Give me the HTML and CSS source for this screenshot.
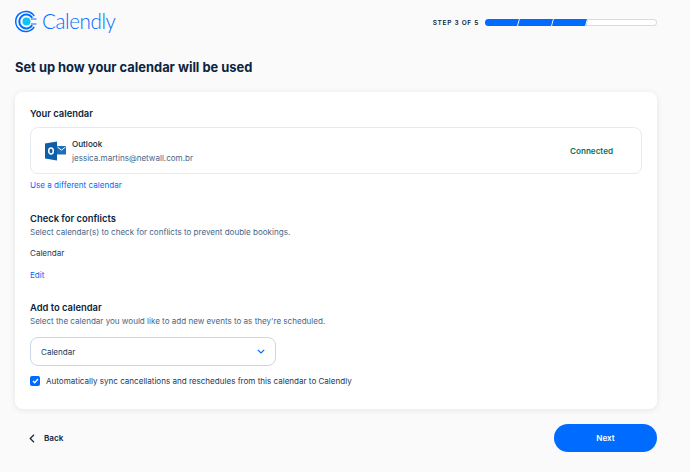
FILE: index.html
```html
<!DOCTYPE html>
<html lang="en">
<head>
<meta charset="utf-8">
<title>Calendly setup</title>
<link rel="stylesheet" href="styles.css">
</head>
<body>
<div class="page">
  <header class="topbar">
    <div class="logo">
      <svg class="logo-mark" width="22" height="23" viewBox="0 0 22 23" fill="none">
        <path d="M19.2 6.2A10 10 0 1 0 19.2 16.8" stroke="#006bff" stroke-width="1.5"/>
        <path d="M17.2 7.8A7 7 0 1 0 17.2 15.2" stroke="#006bff" stroke-width="2"/>
        <circle cx="11.5" cy="11.5" r="4" fill="#12c2f0"/>
        <path d="M16 9H21.5M16 14H21.5" stroke="#006bff" stroke-width="1.2"/>
      </svg>
      <span class="logo-text">Calendly</span>
    </div>
    <div class="progress">
      <span class="step">STEP 3 OF 5</span>
      <div class="track">
        <span class="seg"></span><span class="seg"></span><span class="seg"></span>
      </div>
    </div>
  </header>

  <h1 class="title">Set up how your calendar will be used</h1>

  <main class="card">
    <h2 class="heading">Your calendar</h2>
    <div class="account">
      <svg class="outlook" width="21" height="20" viewBox="0 0 21 20">
        <path d="M12 5H21V13.5H12Z" fill="#1f6fb5"/>
        <path d="M12.5 6 16.5 9.2 20.5 6" fill="none" stroke="#fff" stroke-width="1"/>
        <path d="M12 0.5 0 2.5V17.5L12 19.5Z" fill="#0e5ea8"/>
        <ellipse cx="6" cy="10" rx="2.3" ry="3" fill="none" stroke="#fff" stroke-width="1.5"/>
      </svg>
      <div class="account-info">
        <span class="account-name">Outlook</span>
        <span class="account-mail">jessica.martins@netwall.com.br</span>
      </div>
      <span class="status">Connected</span>
    </div>
    <a class="link link-change" href="#">Use a different calendar</a>

    <h2 class="heading heading-conflicts">Check for conflicts</h2>
    <p class="desc">Select calendar(s) to check for conflicts to prevent double bookings.</p>
    <p class="cal-name">Calendar</p>
    <a class="link link-edit" href="#">Edit</a>

    <h2 class="heading heading-add">Add to calendar</h2>
    <p class="desc">Select the calendar you would like to add new events to as they're scheduled.</p>
    <div class="select">
      <span>Calendar</span>
      <svg width="8" height="5" viewBox="0 0 8 5" fill="none"><path d="M.8.8 4 4 7.2.8" stroke="#006bff" stroke-width="1.2"/></svg>
    </div>
    <label class="check">
      <span class="box"><svg width="7" height="6" viewBox="0 0 7 6" fill="none"><path d="M1 3 2.7 4.7 6 1" stroke="#fff" stroke-width="1.5"/></svg></span>
      <span>Automatically sync cancellations and reschedules from this calendar to Calendly</span>
    </label>
  </main>

  <footer class="actions">
    <a class="back" href="#">
      <svg width="6" height="9" viewBox="0 0 6 9" fill="none"><path d="M5 .8 1.2 4.5 5 8.2" stroke="#0a2540" stroke-width="1.2"/></svg>
      <span>Back</span>
    </a>
    <button class="next" type="button">Next</button>
  </footer>
</div>
</body>
</html>
```
FILE: styles.css
```css
* { box-sizing: border-box; }
html, body { margin: 0; padding: 0; }
body {
  background: #fafafa;
  font-family: "Inter", "Liberation Sans", sans-serif;
  color: #0a2540;
  height: 472px;
  overflow: hidden;
}
.page { width: 642px; margin-left: 15px; }
.topbar { height: 44px; display: flex; justify-content: space-between; align-items: center; }
.logo { display: flex; align-items: center; gap: 5px; padding-bottom: 2px; }
.logo-mark { display: block; }
.logo-text { font-family: "Lato", sans-serif; font-weight: 300; font-size: 20.6px; line-height: 24px; letter-spacing: -.4px; color: #006bff; }
.progress { display: flex; align-items: center; gap: 6px; padding-top: 1px; }
.step { font-size: 6.5px; font-weight: 600; letter-spacing: .7px; color: #0a2540; }
.track { width: 172px; height: 7px; border-radius: 4px; background: #fff; box-shadow: inset 0 0 0 1px #d8dbe0; display: flex; overflow: hidden; }
.seg { width: 34.4px; background: #006bff; border-right: 1px solid #fff; transform: skewX(-15deg); }
.seg:first-child { margin-left: -2px; width: 36px; }
.title { margin: 16px 0 0; font-size: 12.9px; line-height: 16px; font-weight: 700; color: #0a2540; }
.card { margin-top: 16px; height: 317px; background: #fff; border-radius: 8px; box-shadow: 0 1px 6px rgba(0,0,0,.09); padding: 15px; }
.heading { margin: 0; font-size: 9.4px; line-height: 14px; font-weight: 600; color: #0a2540; }
.account { margin-top: 6px; height: 47px; border: 1px solid #e5ebf2; border-radius: 8px; display: flex; align-items: center; padding: 0 28px 0 14px; }
.outlook { display: block; margin-right: 6px; }
.account-info { display: flex; flex-direction: column; flex: 1; gap: 2px; }
.account-name { font-size: 8.1px; line-height: 12px; font-weight: 500; color: #0a2540; }
.account-mail { font-size: 8.05px; line-height: 12px; color: #476788; }
.status { font-size: 8.1px; font-weight: 600; color: #00745f; }
.link { display: block; font-size: 8.1px; line-height: 12px; color: #006bff; text-decoration: none; }
.link-change { margin-top: 5px; }
.heading-conflicts { margin-top: 21px; }
.desc { margin: 0; font-size: 8.05px; line-height: 12px; color: #476788; }
.cal-name { margin: 9px 0 0; font-size: 8.05px; line-height: 12px; color: #1a3a5c; }
.link-edit { margin-top: 10px; }
.heading-add { margin-top: 20px; }
.select { margin-top: 10px; width: 246px; height: 29px; border: 1px solid #cbd6e8; border-radius: 8px; padding: 0 5px 0 10px; display: flex; align-items: center; justify-content: space-between; font-size: 8.05px; color: #1a3a5c; }
.select svg { margin-right: 5px; }
.check { margin-top: 9px; display: flex; align-items: center; gap: 6px; font-size: 8.05px; line-height: 12px; color: #1a3a5c; }
.box { width: 10px; height: 10px; border-radius: 2px; background: #006bff; display: flex; align-items: center; justify-content: center; }
.actions { margin-top: 15px; display: flex; justify-content: space-between; align-items: center; }
.back { display: flex; align-items: center; gap: 9px; margin-left: 14px; font-size: 8.1px; font-weight: 600; color: #0a2540; text-decoration: none; }
.next { width: 103px; height: 28px; border: 0; border-radius: 14px; background: #006bff; color: #fff; font-family: inherit; font-size: 8.1px; font-weight: 600; }
```
